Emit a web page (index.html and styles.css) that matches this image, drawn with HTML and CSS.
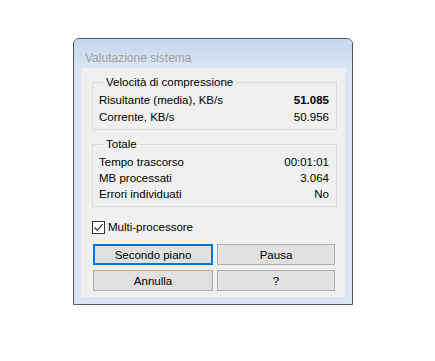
FILE: index.html
```html
<!DOCTYPE html>
<html lang="it">
<head>
    <meta charset="utf-8" />
    <title>Valutazione sistema</title>
    <link rel="stylesheet" href="styles.css">
</head>
<body>
<div class="window">
    <div class="title-bar">Valutazione sistema</div>
    <div class="client">
        <fieldset class="group">
            <legend>Velocità di compressione</legend>
            <div class="row"><span>Risultante (media), KB/s</span><span class="value bold">51.085</span></div>
            <div class="row"><span>Corrente, KB/s</span><span class="value">50.956</span></div>
        </fieldset>

        <fieldset class="group group-total">
            <legend>Totale</legend>
            <div class="row"><span>Tempo trascorso</span><span class="value">00:01:01</span></div>
            <div class="row"><span>MB processati</span><span class="value">3.064</span></div>
            <div class="row"><span>Errori individuati</span><span class="value">No</span></div>
        </fieldset>

        <label class="check">
            <span class="check-box">
                <svg width="11" height="11" viewBox="0 0 11 11">
                    <path d="M1.5 5.5 L4.3 8.3 L9.6 2.2" fill="none" stroke="#333" stroke-width="1.2" />
                </svg>
            </span>
            Multi-processore
        </label>

        <div class="buttons">
            <button class="btn btn-default">Secondo piano</button>
            <button class="btn">Pausa</button>
            <button class="btn">Annulla</button>
            <button class="btn">?</button>
        </div>
    </div>
</div>
</body>
</html>
```

FILE: styles.css
```css
/* Page: white background, dialog placed near the top-left */
body {
    margin: 0;
    padding: 38px 0 0 73px;
    background-color: #fff;
    font-family: "Liberation Sans", Arial, sans-serif;
    font-size: 11.5px;
    color: #000;
}
.window {
    width: 264px;
    border: 1px solid #555;
    border-radius: 6px 6px 0 0;
    background-color: #d9e5f2;
    padding: 0 7px 7px 7px;
}
.title-bar {
    height: 29px;
    margin: 0 -7px;
    padding-left: 11px;
    line-height: 38px;
    font-size: 12px;
    color: #a0a0a0;
    border-radius: 5px 5px 0 0;
    background: linear-gradient(#c4d7eb, #d9e5f2);
}
.client {
    background-color: #f0f0f0;
    padding: 6px 8px 6px 11px;
}
/* Group boxes */
.group {
    margin: 0;
    border: 1px solid #dcdcdc;
    padding: 2px 7px 3px 6px;
}
.group legend {
    margin-left: 5px;
    padding: 0 2px;
    line-height: 16px;
}
.group-total {
    margin-top: 6px;
    padding-bottom: 4px;
}
.row {
    display: flex;
    justify-content: space-between;
    line-height: 17px;
}
.group-total .row {
    line-height: 16px;
}
.bold {
    font-weight: bold;
}
/* Checkbox */
.check {
    display: flex;
    align-items: center;
    gap: 3px;
    margin-top: 13px;
    line-height: 14px;
}
.check-box {
    display: flex;
    width: 11px;
    height: 11px;
    border: 1px solid #333;
    background-color: #fff;
}
/* Buttons */
.buttons {
    display: grid;
    grid-template-columns: 120px 118px;
    column-gap: 4px;
    row-gap: 5px;
    margin-top: 10px;
    margin-left: 1px;
}
.btn {
    height: 21px;
    margin: 0;
    padding: 0;
    font-family: inherit;
    font-size: 11.5px;
    color: #000;
    background-color: #e1e1e1;
    border: 1px solid #adadad;
}
.btn-default {
    border: 2px solid #0078d7;
}
```
